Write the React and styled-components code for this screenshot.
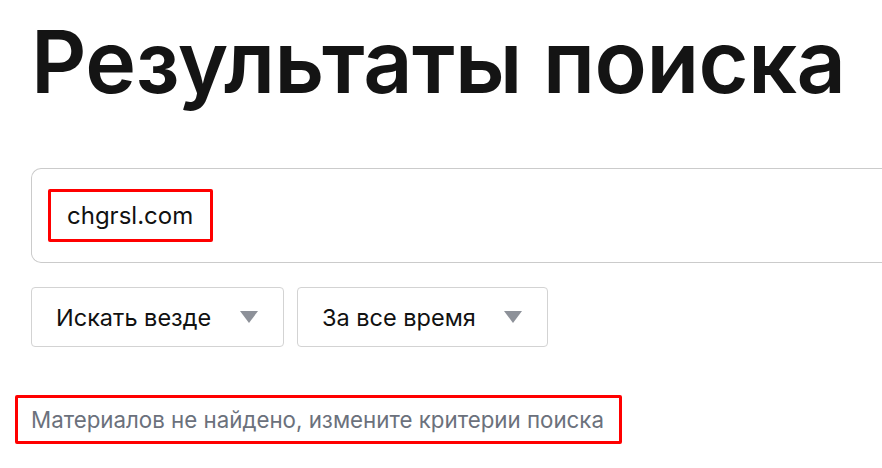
import styled, { createGlobalStyle } from 'styled-components';

const GlobalStyle = createGlobalStyle`
    body {
        margin: 0;
        background: #fff;
        font-family: Inter, "Noto Sans", sans-serif;
        overflow: hidden;
    }
`;

const Page = styled.div`
    padding: 20px 0 0 31px;
    width: 900px;
`;

const Title = styled.h1`
    margin: 0;
    font-size: 86px;
    line-height: 84px;
    font-weight: 600;
    letter-spacing: -0.5px;
    color: #141414;
`;

const SearchBox = styled.div`
    margin-top: 64px;
    height: 95px;
    box-sizing: border-box;
    border: 1px solid #cbcbcb;
    border-right: none;
    border-radius: 10px 0 0 10px;
    padding: 20px 0 0 16px;
`;

const Highlight = styled.div`
    display: inline-flex;
    align-items: center;
    box-sizing: border-box;
    border: 3px solid #ff0000;
    border-radius: 2px;
`;

const QueryBox = styled(Highlight)`
    height: 53px;
    padding: 0 17px 0 16px;
    font-size: 24px;
    color: #111;
`;

const Filters = styled.div`
    display: flex;
    gap: 13px;
    margin-top: 24px;
`;

const Select = styled.div`
    display: flex;
    align-items: center;
    justify-content: space-between;
    box-sizing: border-box;
    width: ${p => p.$width}px;
    height: 60px;
    padding: 0 25px 0 24px;
    border: 1px solid #d3d3d3;
    border-radius: 4px;
    font-size: 23.5px;
    color: #111;
`;

const Arrow = styled.span`
    width: 0;
    height: 0;
    border-left: 9px solid transparent;
    border-right: 9px solid transparent;
    border-top: 12px solid #8d9199;
`;

const Message = styled(Highlight)`
    margin: 48px 0 0 -16px;
    width: 607px;
    height: 49px;
    padding-left: 13px;
    font-size: 22.3px;
    color: #6b717c;
`;

export default function App() {
    return (
        <>
            <GlobalStyle />
            <Page>
                <Title>Результаты поиска</Title>
                <SearchBox>
                    <QueryBox>chgrsl.com</QueryBox>
                </SearchBox>
                <Filters>
                    <Select $width={253}>
                        Искать везде
                        <Arrow />
                    </Select>
                    <Select $width={251}>
                        За все время
                        <Arrow />
                    </Select>
                </Filters>
                <Message>Материалов не найдено, измените критерии поиска</Message>
            </Page>
        </>
    );
}
